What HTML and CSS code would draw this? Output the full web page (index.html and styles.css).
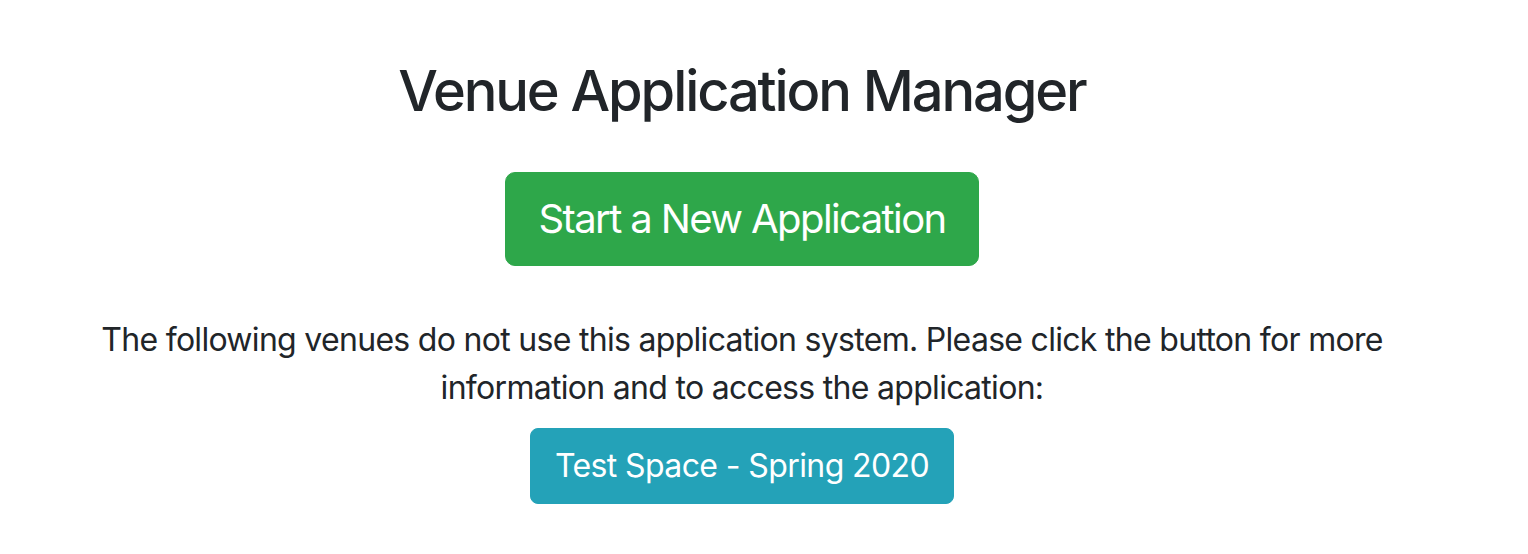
FILE: index.html
```html
<!DOCTYPE html>
<html lang="en">
<head>
<meta charset="utf-8">
<title>Venue Application Manager</title>
<link rel="stylesheet" href="styles.css">
</head>
<body>
<main class="page">
  <h1 class="title">Venue Application Manager</h1>
  <a class="btn btn-success btn-lg" href="#">Start a New Application</a>
  <p class="note">The following venues do not use this application system. Please click the button for more information and to access the application:</p>
  <a class="btn btn-info" href="#">Test Space - Spring 2020</a>
</main>
</body>
</html>
```
FILE: styles.css
```css
html, body {
  margin: 0;
  padding: 0;
  background: #fff;
}
body {
  font-family: Inter, "Liberation Sans", sans-serif;
  color: #212529;
  font-size: 32px;
  line-height: 48px;
}
.page {
  width: 1484px;
  padding: 58px 30px 0;
  box-sizing: border-box;
  display: flex;
  flex-direction: column;
  align-items: center;
  text-align: center;
}
.title {
  margin: 0;
  font-size: 56px;
  line-height: 67px;
  font-weight: 500;
  letter-spacing: -2.1px;
}
.btn {
  display: inline-block;
  color: #fff;
  text-decoration: none;
  border: 1px solid transparent;
}
.btn-lg {
  margin-top: 47px;
  font-size: 40px;
  line-height: 60px;
  padding: 16px 32px;
  border-radius: 10px;
  letter-spacing: -1.6px;
}
.btn-success {
  background: #2ea74a;
  border-color: #2ea74a;
}
.note {
  margin: 50px 0 0;
  max-width: 1320px;
  letter-spacing: -0.7px;
}
.btn-info {
  margin-top: 16px;
  font-size: 32px;
  line-height: 48px;
  padding: 13px 24px;
  border-radius: 8px;
  letter-spacing: -0.6px;
  background: #24a2b8;
  border-color: #24a2b8;
}
```
